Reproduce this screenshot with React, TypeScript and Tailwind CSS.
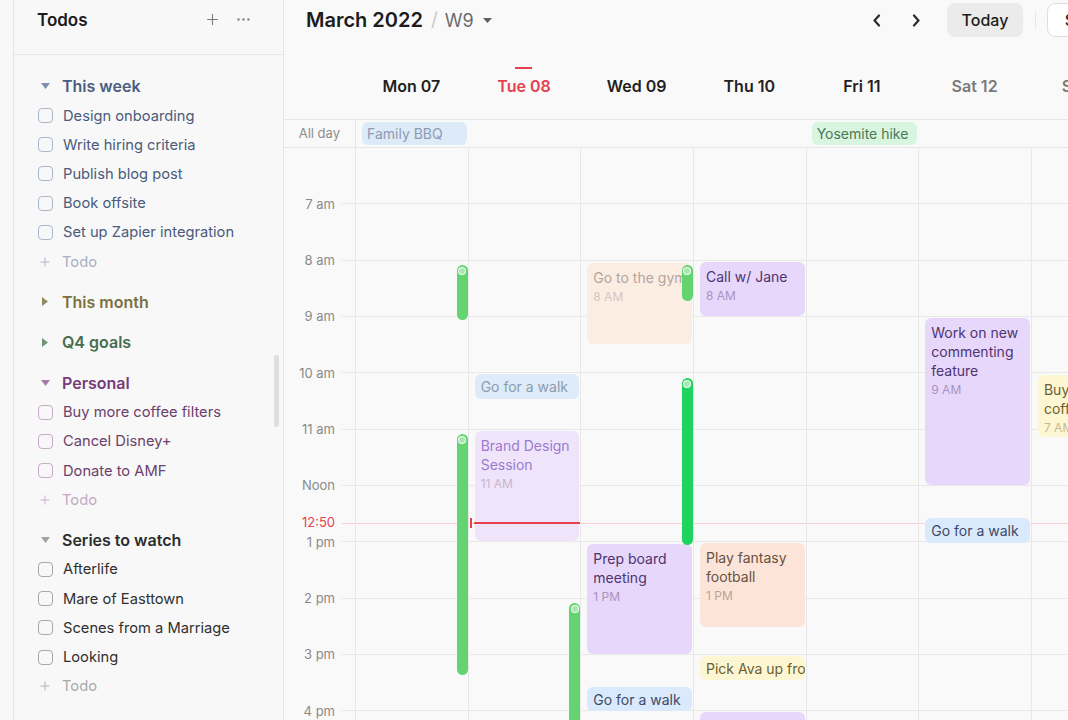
import React from "react";
import { Plus, MoreHorizontal } from "lucide-react";

type Section = {
  name: string;
  open: boolean;
  head: string;
  tri: string;
  item: string;
  box: string;
  add: string;
  todos: string[];
};

const sections: Section[] = [
  {
    name: "This week",
    open: true,
    head: "text-[#4a5d80]",
    tri: "fill-[#7f90ad]",
    item: "text-[#4a5b7b]",
    box: "border-[#a9b8cc]",
    add: "text-[#a6b0c2]",
    todos: ["Design onboarding", "Write hiring criteria", "Publish blog post", "Book offsite", "Set up Zapier integration"],
  },
  {
    name: "This month",
    open: false,
    head: "text-[#7b7140]",
    tri: "fill-[#938a60]",
    item: "",
    box: "",
    add: "",
    todos: [],
  },
  {
    name: "Q4 goals",
    open: false,
    head: "text-[#476d51]",
    tri: "fill-[#6f9677]",
    item: "",
    box: "",
    add: "",
    todos: [],
  },
  {
    name: "Personal",
    open: true,
    head: "text-[#773c78]",
    tri: "fill-[#a67ba7]",
    item: "text-[#6c3f6d]",
    box: "border-[#c9abc9]",
    add: "text-[#c2a9c3]",
    todos: ["Buy more coffee filters", "Cancel Disney+", "Donate to AMF"],
  },
  {
    name: "Series to watch",
    open: true,
    head: "text-[#2d2d2d]",
    tri: "fill-[#a3a3a3]",
    item: "text-[#303030]",
    box: "border-[#a8a8a8]",
    add: "text-[#a9a9a9]",
    todos: ["Afterlife", "Mare of Easttown", "Scenes from a Marriage", "Looking"],
  },
];

const days = [
  { label: "Mon 07", cls: "text-[#1f1f1f]", today: false },
  { label: "Tue 08", cls: "text-[#e5414f]", today: true },
  { label: "Wed 09", cls: "text-[#1f1f1f]", today: false },
  { label: "Thu 10", cls: "text-[#1f1f1f]", today: false },
  { label: "Fri 11", cls: "text-[#1f1f1f]", today: false },
  { label: "Sat 12", cls: "text-[#7a7a7a]", today: false },
  { label: "Sun 13", cls: "text-[#7a7a7a]", today: false },
];

const hourLabels = ["7 am", "8 am", "9 am", "10 am", "11 am", "Noon", "1 pm", "2 pm", "3 pm", "4 pm", "5 pm"];

type Ev = {
  day: number;
  top: number;
  h: number;
  title: string;
  time?: string;
  box: string;
  sub?: string;
  pill?: boolean;
  w?: number;
};

const purple = "bg-[#e7d7fb] text-[#4e3470]";
const events: Ev[] = [
  { day: 1, top: 226, h: 25, title: "Go for a walk", box: "bg-[#deebf8] text-[#8c9bb1]", pill: true },
  { day: 1, top: 283, h: 110, title: "Brand Design Session", time: "11 AM", box: "bg-[#f0e4fb] text-[#9a7bd0]", sub: "text-[#c3b8cf]" },
  { day: 2, top: 115, h: 81, title: "Go to the gym", time: "8 AM", box: "bg-[#fcede3] text-[#b3a59c] whitespace-nowrap", sub: "text-[#d4c6bd]" },
  { day: 2, top: 396, h: 110, title: "Prep board meeting", time: "1 PM", box: purple, sub: "text-[#a893c2]" },
  { day: 2, top: 539, h: 24, title: "Go for a walk", box: "bg-[#dbe9fc] text-[#3b4a69]", pill: true },
  { day: 3, top: 114, h: 54, title: "Call w/ Jane", time: "8 AM", box: purple, sub: "text-[#a893c2]" },
  { day: 3, top: 395, h: 84, title: "Play fantasy football", time: "1 PM", box: "bg-[#fce5d8] text-[#6a5141]", sub: "text-[#b9a395]" },
  { day: 3, top: 508, h: 24, title: "Pick Ava up from school", box: "bg-[#fdf6d3] text-[#6a5f31]", pill: true },
  { day: 3, top: 564, h: 60, title: "Design review", time: "4 PM", box: purple, sub: "text-[#a893c2]" },
  { day: 5, top: 170, h: 167, title: "Work on new commenting feature", time: "9 AM", box: purple, sub: "text-[#a893c2]" },
  { day: 5, top: 370, h: 25, title: "Go for a walk", box: "bg-[#dbe9fc] text-[#3b4a69]", pill: true },
  { day: 6, top: 227, h: 62, title: "Buy coffee", time: "7 AM", box: "bg-[#fdf6d3] text-[#6a5f31]", sub: "text-[#c5bb8e]", w: 60 },
];

type Bar = { day: number; top: number; h: number; bright?: boolean };
const bars: Bar[] = [
  { day: 0, top: 117, h: 55 },
  { day: 0, top: 286, h: 241 },
  { day: 1, top: 455, h: 200 },
  { day: 2, top: 117, h: 36 },
  { day: 2, top: 230, h: 167, bright: true },
];

const TriDown = ({ cls }: { cls: string }) => (
  <svg width="9" height="6" viewBox="0 0 9 6" className={cls}>
    <path d="M0 0h9L4.5 6z" />
  </svg>
);

const TriRight = ({ cls }: { cls: string }) => (
  <svg width="6" height="9" viewBox="0 0 6 9" className={cls}>
    <path d="M0 0v9l6-4.5z" />
  </svg>
);

const Sidebar = () => (
  <div className="relative w-[270px] shrink-0 border-r border-[#e5e5e5] bg-[#f8f8f8]">
    <div className="flex h-[55px] items-start border-b border-[#e6e6e6] pl-[23px] pr-[31px] pt-[8px]">
      <h2 className="flex-1 text-[17px] font-semibold leading-[24px] text-[#1c1c1c]">Todos</h2>
      <Plus size={17} strokeWidth={1.6} className="mr-[14px] mt-[3px] text-[#7d7d7d]" />
      <MoreHorizontal size={17} strokeWidth={1.8} className="mt-[3px] text-[#8a8a8a]" />
    </div>

    <div className="flex flex-col gap-[10.5px] pl-[24px] pt-[16px]">
      {sections.map((s) => (
        <div key={s.name}>
          <div className="flex h-[30px] items-center gap-[10px]">
            <span className="flex w-[14px] justify-center">
              {s.open ? <TriDown cls={s.tri} /> : <TriRight cls={s.tri} />}
            </span>
            <span className={`text-[16px] font-semibold ${s.head}`}>{s.name}</span>
          </div>
          {s.open && (
            <>
              {s.todos.map((t) => (
                <div key={t} className={`flex h-[29.2px] items-center gap-[10px] text-[14.7px] ${s.item}`}>
                  <span className={`h-[15px] w-[15px] rounded-[4px] border-[1.5px] ${s.box}`} />
                  <span>{t}</span>
                </div>
              ))}
              <div className={`flex h-[29.2px] items-center gap-[10px] text-[14.7px] ${s.add}`}>
                <span className="flex w-[14px] justify-center">
                  <Plus size={14} strokeWidth={1.5} />
                </span>
                <span>Todo</span>
              </div>
            </>
          )}
        </div>
      ))}
    </div>

    <div className="absolute left-[260px] top-[355px] h-[72px] w-[5px] rounded-full bg-[#dedede]" />
  </div>
);

const Chevron = ({ dir }: { dir: "l" | "r" }) => (
  <svg width="10" height="13" viewBox="0 0 10 13" fill="none" stroke="#2a2a2a" strokeWidth="2.2" strokeLinecap="round" strokeLinejoin="round">
    {dir === "l" ? <path d="M7 1.5 2.5 6.5 7 11.5" /> : <path d="M3 1.5 7.5 6.5 3 11.5" />}
  </svg>
);

const Header = () => (
  <div className="flex h-[40px] w-[860px] items-center pl-[22px] pr-[17px]">
    <h1 className="text-[20px] font-semibold text-[#1c1c1c]">March 2022</h1>
    <span className="ml-[8px] text-[19px] text-[#c9c9c9]">/</span>
    <span className="ml-[7px] text-[18px] text-[#6b6b6b]">W9</span>
    <svg width="9" height="5" viewBox="0 0 9 5" className="ml-[9px] fill-[#5f5f5f]">
      <path d="M0 0h9L4.5 5z" />
    </svg>
    <div className="flex-1" />
    <button className="flex h-[28px] w-[28px] items-center justify-center">
      <Chevron dir="l" />
    </button>
    <button className="ml-[11px] flex h-[28px] w-[28px] items-center justify-center">
      <Chevron dir="r" />
    </button>
    <button className="ml-[17px] h-[34px] w-[76px] rounded-lg bg-[#ebebeb] text-[16px] font-medium text-[#1c1c1c]">
      Today
    </button>
    <div className="ml-[12px] h-[18px] w-px bg-[#e6e6e6]" />
    <button className="ml-[11px] h-[34px] w-[80px] shrink-0 rounded-lg border border-[#dedede] bg-white text-[16px] font-medium text-[#1c1c1c]">
      Share
    </button>
  </div>
);

const DayHeaders = () => (
  <div className="flex h-[79px]">
    <div className="w-[71px] shrink-0" />
    {days.map((d) => (
      <div key={d.label} className="flex w-[112.67px] shrink-0 flex-col items-center pt-[27px]">
        <div className={`mb-[6px] h-[2px] w-[17px] ${d.today ? "bg-[#e5414f]" : "bg-transparent"}`} />
        <span className={`text-[16px] font-semibold leading-[22px] ${d.cls}`}>{d.label}</span>
      </div>
    ))}
  </div>
);

const AllDay = () => (
  <div className="flex h-[29px] border-y border-[#e6e6e6]">
    <div className="flex w-[71px] shrink-0 items-center justify-end pr-[15px] text-[13px] text-[#8e8e8e]">All day</div>
    {days.map((d, i) => (
      <div key={d.label} className={`flex w-[112.67px] shrink-0 items-center pl-[6px] pr-[1px] ${i === 0 ? "border-l border-[#e6e6e6]" : ""}`}>
        {i === 0 && (
          <div className="flex h-[23px] w-full items-center rounded-md bg-[#ddeaf8] pl-[5px] text-[14px] text-[#8d9cb2]">Family BBQ</div>
        )}
        {i === 4 && (
          <div className="flex h-[23px] w-full items-center rounded-md bg-[#d8f5df] pl-[5px] text-[14px] text-[#4b7956]">Yosemite hike</div>
        )}
      </div>
    ))}
  </div>
);

const EventCard = ({ e }: { e: Ev }) => (
  <div
    className={`absolute left-[6px] overflow-hidden rounded-md ${e.box} ${e.pill ? "flex items-center whitespace-nowrap px-[6px]" : "px-[6px] pt-[5px]"}`}
    style={{ top: e.top, height: e.h, ...(e.w ? { width: e.w } : { right: 1 }) }}
  >
    <div className="text-[14px] leading-[19px]">{e.title}</div>
    {e.time && <div className={`text-[12px] leading-[19px] ${e.sub}`}>{e.time}</div>}
  </div>
);

const GreenBar = ({ b }: { b: Bar }) => (
  <div
    className={`absolute right-0 z-10 flex w-[11px] justify-center rounded-full pt-[2px] ${b.bright ? "bg-[#1fd45e]" : "bg-[#63d46f]"}`}
    style={{ top: b.top, height: b.h }}
  >
    <div className="h-[8px] w-[8px] rounded-full border border-white/90 bg-[#a9e6b0]" />
  </div>
);

const Grid = () => (
  <div className="relative flex h-[600px]">
    <div className="relative w-[71px] shrink-0">
      {hourLabels.map((h) => (
        <div key={h} className="relative h-[56.33px]">
          <span className="absolute bottom-0 right-[20px] translate-y-1/2 text-[13px] text-[#8a8a8a]">{h}</span>
          <div className="absolute bottom-0 right-0 h-px w-[13px] bg-[#e8e8e8]" />
        </div>
      ))}
      <span className="absolute right-[20px] top-[375px] -translate-y-1/2 bg-[#f9f9f9] text-[13px] text-[#e5414f]">12:50</span>
    </div>

    <div className="absolute left-[58px] right-0 top-[375px] h-px bg-[#fad0d5]" />

    {days.map((d, i) => (
      <div key={d.label} className="relative w-[112.67px] shrink-0 border-l border-[#e8e8e8]">
        {hourLabels.map((h) => (
          <div key={h} className="h-[56.33px] border-b border-[#e8e8e8]" />
        ))}
        {events
          .filter((e) => e.day === i)
          .map((e) => (
            <EventCard key={e.title + e.top} e={e} />
          ))}
        {bars
          .filter((b) => b.day === i)
          .map((b) => (
            <GreenBar key={b.top} b={b} />
          ))}
        {d.today && (
          <>
            <div className="absolute left-[5px] right-0 top-[374px] z-20 h-[2px] bg-[#e5414f]" />
            <div className="absolute left-[1px] top-[370px] z-20 h-[10px] w-[2px] bg-[#e5414f]" />
          </>
        )}
      </div>
    ))}
  </div>
);

export default function App() {
  return (
    <div className="flex h-[720px] w-[1068px] overflow-hidden bg-[#f8f8f8] font-[Inter,sans-serif] antialiased">
      <div className="w-[14px] shrink-0 border-r border-[#e5e5e5]" />
      <Sidebar />
      <div className="min-w-0 flex-1 overflow-hidden bg-[#f9f9f9]">
        <Header />
        <DayHeaders />
        <AllDay />
        <Grid />
      </div>
    </div>
  );
}
